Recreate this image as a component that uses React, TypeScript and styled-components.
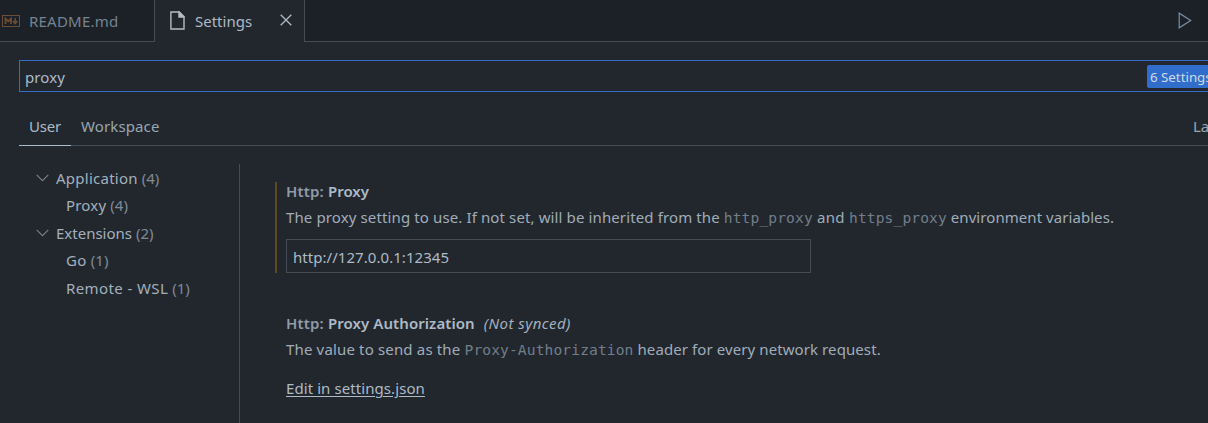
import React from "react";
import styled, { createGlobalStyle } from "styled-components";

const Global = createGlobalStyle`
  * { box-sizing: border-box; }
  body { margin: 0; background: #22272e; overflow: hidden; }
`;

const Window = styled.div`
  width: 100vw;
  height: 423px;
  overflow: hidden;
  display: flex;
  flex-direction: column;
  background: #22272e;
  color: #adbac7;
  font: 15px/22px "Noto Sans", "Open Sans", sans-serif;
  white-space: nowrap;
`;

const Run = styled.span<{ $track?: number }>`
  letter-spacing: ${(p) => p.$track ?? 0}px;
`;

const TabBar = styled.div`
  display: flex;
  flex: none;
  height: 42px;
  background: #1c2128;
`;

const Tab = styled.div<{ $active?: boolean; $width: number }>`
  display: flex;
  align-items: center;
  width: ${(p) => p.$width}px;
  height: 42px;
  padding-left: ${(p) => (p.$active ? 15 : 2)}px;
  padding-bottom: ${(p) => (p.$active ? 2 : 0)}px;
  border-right: 1px solid #444c56;
  border-bottom: ${(p) => (p.$active ? "0" : "1px solid #444c56")};
  background: ${(p) => (p.$active ? "#22272e" : "#1c2128")};
  color: ${(p) => (p.$active ? "#adbac7" : "#768390")};
  svg { flex: none; }
`;

const TabLabel = styled.span<{ $track: number; $left: number; $width: number }>`
  margin-left: ${(p) => p.$left}px;
  width: ${(p) => p.$width}px;
  padding-top: 1px;
  letter-spacing: ${(p) => p.$track}px;
`;

const TabActions = styled.div`
  display: flex;
  flex: 1;
  justify-content: flex-end;
  padding: 12px 16px 0 0;
  border-bottom: 1px solid #444c56;
`;

const SearchBox = styled.div`
  display: flex;
  flex: none;
  align-items: center;
  justify-content: space-between;
  height: 32px;
  margin: 18px 0 0 19px;
  padding: 2px 0 0 5px;
  border: 1px solid #316dca;
  border-right: 0;
`;

const CountBadge = styled.span`
  flex: none;
  width: 61px;
  height: 23px;
  margin-top: -2px;
  padding-left: 3px;
  overflow: hidden;
  border-radius: 2px 0 0 2px;
  background: #316dca;
  color: #cdd9e5;
  font-size: 13.3px;
  line-height: 24px;
`;

const ScopeBar = styled.div`
  display: flex;
  flex: none;
  height: 38px;
  margin: 16px 0 0 19px;
  border-bottom: 1px solid #444c56;
`;

const ScopeTab = styled.div<{ $active?: boolean }>`
  height: 38px;
  padding: 7px 10px 0;
  border-bottom: 1px solid ${(p) => (p.$active ? "#adbac7" : "transparent")};
  color: ${(p) => (p.$active ? "#adbac7" : "#9aa6b2")};
`;

const SyncNote = styled.div`
  width: 16px;
  margin-left: auto;
  padding: 7px 0 0 1px;
  overflow: hidden;
  color: #9aa6b2;
`;

const Body = styled.div`
  display: flex;
  flex: 1;
  padding-top: 18px;
`;

const Tree = styled.div`
  width: 240px;
  border-right: 1px solid #444c56;
`;

const TreeRow = styled.div<{ $child?: boolean }>`
  display: flex;
  align-items: center;
  height: 27.5px;
  padding-left: ${(p) => (p.$child ? 66 : 36)}px;
  color: #a3b0bc;
  svg { margin: 0 7px 0 0; }
`;

const Count = styled.span`
  margin-left: 4px;
  color: #7f8a95;
`;

const Settings = styled.div`
  padding: 18px 0 0 35px;
`;

const Setting = styled.section<{ $modified?: boolean }>`
  width: 900px;
  height: ${(p) => (p.$modified ? 91 : 120)}px;
  padding-left: 9px;
  margin-bottom: 41px;
  border-left: 2px solid ${(p) => (p.$modified ? "#5f4a25" : "transparent")};
`;

const Title = styled.div`
  height: 24px;
  line-height: 18px;
  font-weight: 600;
`;

const Category = styled.span`
  color: #8f9ba7;
  letter-spacing: 0.17px;
`;

const NotSynced = styled.em`
  margin-left: 9px;
  font-weight: 400;
  letter-spacing: 0.45px;
  color: #a3b0bc;
`;

const Description = styled.div`
  height: 33px;
  color: #a0adb9;
`;

const Code = styled.code`
  color: #717e8a;
  font: 14.62px/20px "DejaVu Sans Mono", monospace;
  letter-spacing: 0.1px;
`;

const ValueInput = styled.div`
  width: 525px;
  height: 34px;
  padding: 6px 0 0 6px;
  border: 1px solid #444c56;
`;

const EditLink = styled.a`
  display: inline-block;
  margin-top: 6px;
  letter-spacing: 0.08px;
  text-decoration: underline;
  text-decoration-thickness: 1px;
  text-underline-offset: 2px;
`;

const Chevron = () => (
  <svg width="13" height="8" viewBox="0 0 13 8" fill="none" stroke="#768390" strokeWidth="1.1">
    <path d="M0.7 0.8 6.5 6.6 12.3 0.8" />
  </svg>
);

const MarkdownIcon = () => (
  <svg width="18" height="12" viewBox="0 0 18 12" fill="none" stroke="#6e4e33">
    <rect x=".5" y=".5" width="17" height="11" />
    <path d="M3.5 9V3.6L6.25 6.4 9 3.6V9" strokeWidth="1.7" />
    <path d="M13.2 3v5M11 6l2.2 2.5L15.4 6" strokeWidth="1.5" />
  </svg>
);

const FileIcon = () => (
  <svg width="15" height="19" viewBox="0 0 15 19" fill="none" stroke="#b9bcbd" strokeWidth="1.4">
    <path d="M.9 1H9.2L14 5.8V18H.9Z" />
    <path d="M9 1V6H14Z" fill="#b9bcbd" />
  </svg>
);

const CloseIcon = () => (
  <svg width="12" height="12" viewBox="0 0 12 12" stroke="#adbac7" strokeWidth="1.3">
    <path d="M.7.7 11.3 11.3M11.3.7.7 11.3" />
  </svg>
);

const RunIcon = () => (
  <svg width="14" height="17" viewBox="0 0 14 17" fill="none" stroke="#768fa5" strokeWidth="1.2">
    <path d="M1.2 1.2V15.8L12.7 8.5Z" />
  </svg>
);

export default function App() {
  return (
    <Window>
      <Global />
      <TabBar>
        <Tab $width={155}>
          <MarkdownIcon />
          <TabLabel $left={9} $width={110} $track={0.22}>README.md</TabLabel>
        </Tab>
        <Tab $active $width={150}>
          <FileIcon />
          <TabLabel $left={10} $width={85} $track={0}>Settings</TabLabel>
          <CloseIcon />
        </Tab>
        <TabActions><RunIcon /></TabActions>
      </TabBar>
      <SearchBox>
        <Run $track={0.1}>proxy</Run>
        <CountBadge>6 Settings Found</CountBadge>
      </SearchBox>
      <ScopeBar>
        <ScopeTab $active><Run $track={-0.2}>User</Run></ScopeTab>
        <ScopeTab><Run $track={0.12}>Workspace</Run></ScopeTab>
        <SyncNote>Last synced</SyncNote>
      </ScopeBar>
      <Body>
        <Tree>
          <TreeRow><Chevron /><Run $track={0.25}>Application</Run><Count>(4)</Count></TreeRow>
          <TreeRow $child><Run $track={0.2}>Proxy</Run><Count>(4)</Count></TreeRow>
          <TreeRow><Chevron /><Run>Extensions</Run><Count>(2)</Count></TreeRow>
          <TreeRow $child><Run $track={0.4}>Go</Run><Count>(1)</Count></TreeRow>
          <TreeRow $child><Run $track={0.4}>Remote - WSL</Run><Count>(1)</Count></TreeRow>
        </Tree>
        <Settings>
          <Setting $modified>
            <Title><Category>Http: </Category>Proxy</Title>
            <Description>
              <Run $track={0.12}>The proxy setting to use. If not set, will be inherited from the </Run>
              <Code>http_proxy</Code><Run $track={0.3}> and </Run><Code>https_proxy</Code>
              <Run $track={0.06}> environment variables.</Run>
            </Description>
            <ValueInput><Run $track={0.05}>http://127.0.0.1:12345</Run></ValueInput>
          </Setting>
          <Setting>
            <Title><Category>Http: </Category><Run $track={0.07}>Proxy Authorization</Run><NotSynced>(Not synced)</NotSynced></Title>
            <Description>
              <Run $track={0.16}>The value to send as the </Run><Code>Proxy-Authorization</Code>
              <Run $track={0.09}> header for every network request.</Run>
            </Description>
            <EditLink>Edit in settings.json</EditLink>
          </Setting>
        </Settings>
      </Body>
    </Window>
  );
}
